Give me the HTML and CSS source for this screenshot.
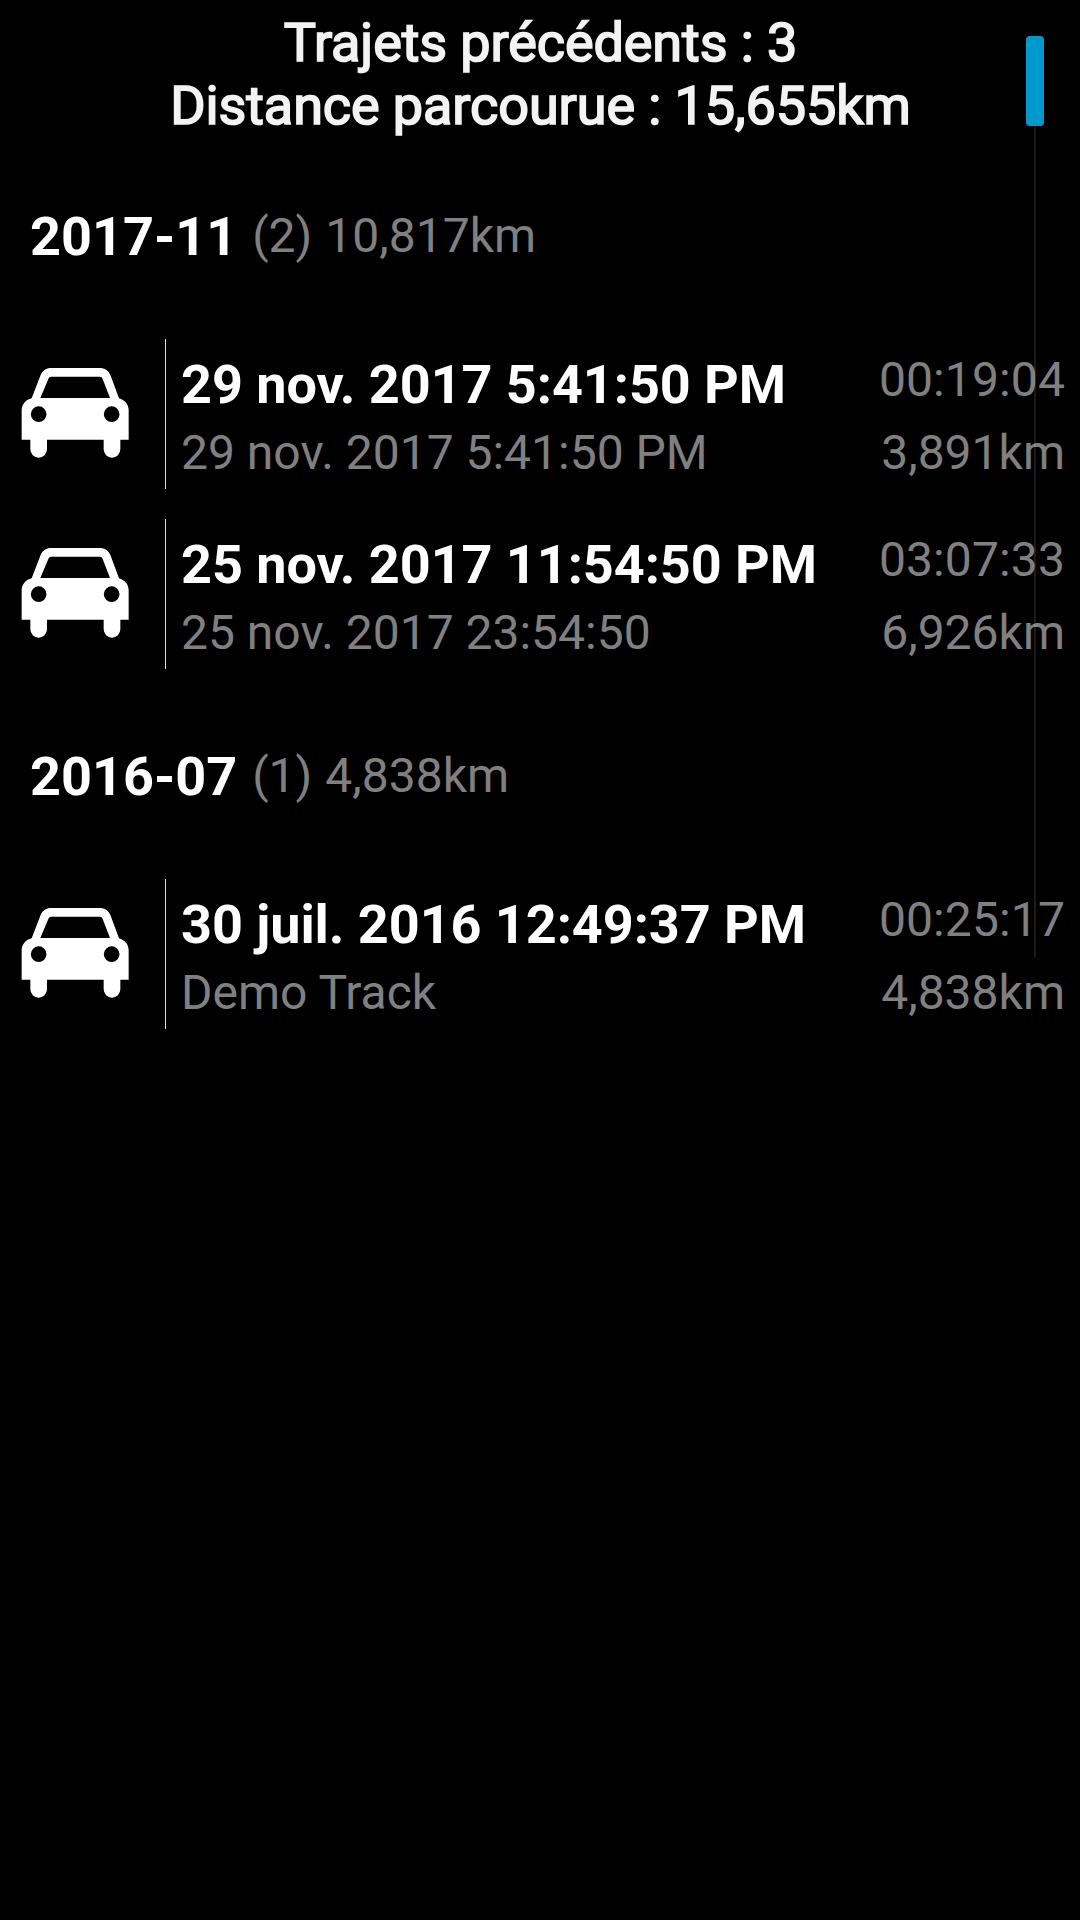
FILE: index.html
```html
<!DOCTYPE html>
<html lang="fr">

<head>
    <meta charset="UTF-8">
    <meta name="viewport" content="width=device-width, initial-scale=1.0">
    <title>Trajets précédents</title>
    <link rel="stylesheet" href="styles.css">
</head>

<body>
    <!-- Car icon, shared by every track -->
    <svg class="sprite" width="0" height="0">
        <symbol id="car" viewBox="0 0 450 450">
            <path fill-rule="evenodd" d="M154 87H298C315 87 326 95 332 110L357 178C375 184 386 196 386 214V302H361V331A25 25 0 0 1 311 331V302H141V331A25 25 0 0 1 91 331V302H65V214C65 196 78 182 95 178L121 110C127 95 138 87 154 87ZM154 113C149 113 147 115 145 120L121 177H330L308 120C306 115 304 113 299 113ZM116 202A23.5 23.5 0 1 0 116 249A23.5 23.5 0 1 0 116 202ZM335 202A23.5 23.5 0 1 0 335 249A23.5 23.5 0 1 0 335 202Z" />
        </symbol>
    </svg>

    <header class="summary">
        <p>Trajets précédents : 3</p>
        <p>Distance parcourue : 15,655km</p>
    </header>

    <main>
        <section>
            <div class="month">
                <h2>2017-11</h2>
                <span class="count">(2)</span>
                <span>10,817km</span>
            </div>
            <div class="track">
                <svg class="icon"><use href="#car" /></svg>
                <div class="info">
                    <h3>29 nov. 2017 5:41:50 PM</h3>
                    <p>29 nov. 2017 5:41:50 PM</p>
                </div>
                <div class="stats">
                    <p class="time">00:19:04</p>
                    <p>3,891km</p>
                </div>
            </div>
            <div class="track">
                <svg class="icon"><use href="#car" /></svg>
                <div class="info">
                    <h3>25 nov. 2017 11:54:50 PM</h3>
                    <p>25 nov. 2017 23:54:50</p>
                </div>
                <div class="stats">
                    <p class="time">03:07:33</p>
                    <p>6,926km</p>
                </div>
            </div>
        </section>

        <section>
            <div class="month">
                <h2>2016-07</h2>
                <span class="count">(1)</span>
                <span>4,838km</span>
            </div>
            <div class="track">
                <svg class="icon"><use href="#car" /></svg>
                <div class="info">
                    <h3>30 juil. 2016 12:49:37 PM</h3>
                    <p>Demo Track</p>
                </div>
                <div class="stats">
                    <p class="time">00:25:17</p>
                    <p>4,838km</p>
                </div>
            </div>
        </section>
    </main>

    <div class="scrollbar">
        <div class="thumb"></div>
    </div>
</body>

</html>
```
FILE: styles.css
```css
* {
    box-sizing: border-box;
    margin: 0;
    padding: 0;
}

body {
    position: relative;
    min-height: 100vh;
    background: #000;
    color: #808080;
    font-family: Roboto, sans-serif;
    font-size: 48px;
    line-height: 56px;
    white-space: nowrap;
    overflow: hidden;
}

.sprite {
    position: absolute;
}

.summary {
    height: 144px;
    padding: 11px 0 0 1px;
    color: #f3f3f3;
    font-size: 54px;
    line-height: 63px;
    letter-spacing: -0.1px;
    text-align: center;
    -webkit-text-stroke: 1.7px #f3f3f3;
}

.month {
    display: flex;
    align-items: flex-start;
    height: 180px;
    padding: 61px 30px 0;
}

.month h2 {
    margin-right: 15px;
    color: #fff;
    font-size: 54px;
    line-height: 63px;
    font-weight: 700;
}

.month span {
    margin-top: 3px;
}

.month .count {
    margin-right: 13px;
}

.track {
    display: flex;
    height: 180px;
    padding: 15px 15px 15px 0;
}

.icon {
    width: 150px;
    height: 150px;
    margin-right: 15px;
    fill: #fff;
}

.info {
    flex: 1;
    padding: 14px 0 0 15px;
    border-left: 1px solid #ddd;
}

.info h3 {
    color: #fff;
    font-size: 54px;
    line-height: 63px;
    font-weight: 700;
    letter-spacing: -0.06px;
}

.info p {
    margin-top: 9px;
}

.stats {
    padding-top: 13px;
    text-align: right;
}

.stats p + p {
    margin-top: 17px;
}

.stats .time {
    letter-spacing: 0.12px;
}

.scrollbar {
    position: absolute;
    top: 36px;
    left: 1026px;
    width: 18px;
    height: 921px;
    background: linear-gradient(rgba(255, 255, 255, 0.1), rgba(255, 255, 255, 0.1)) center / 2px 100% no-repeat;
}

.thumb {
    height: 90px;
    border-radius: 4px;
    background: #0099cc;
}
```
